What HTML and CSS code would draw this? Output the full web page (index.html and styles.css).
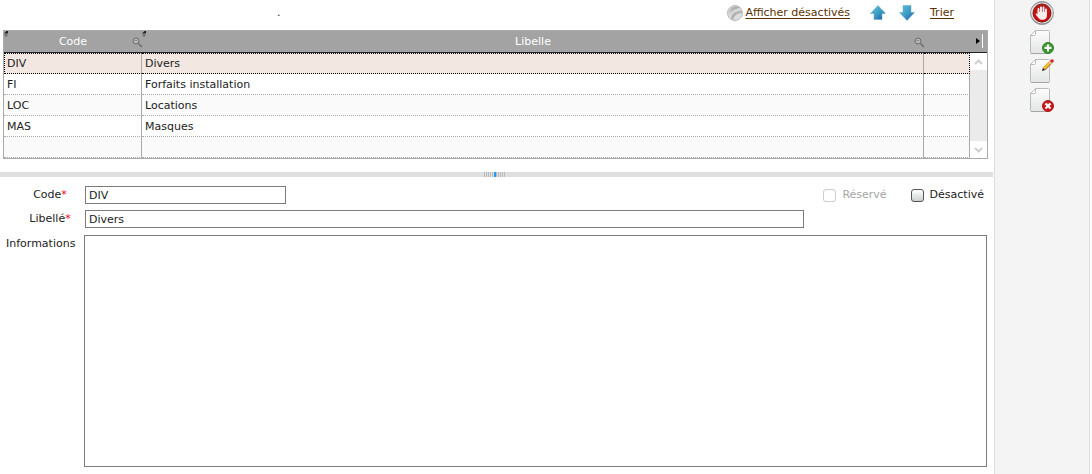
FILE: index.html
```html
<!DOCTYPE html>
<html lang="fr">
<head>
    <meta charset="UTF-8">
    <meta name="viewport" content="width=device-width, initial-scale=1.0">
    <title>Divers</title>
    <link rel="stylesheet" href="styles.css">
</head>
<body>
    <!-- shared shapes -->
    <svg class="defs" width="0" height="0" aria-hidden="true">
        <defs>
            <linearGradient id="paper" x1="0" y1="0" x2="0" y2="1">
                <stop offset="0" stop-color="#fdfdfd"/>
                <stop offset="1" stop-color="#e2e5e4"/>
            </linearGradient>
            <linearGradient id="blue" x1="0" y1="0" x2="1" y2="1">
                <stop offset="0" stop-color="#5cc0d6"/>
                <stop offset="0.5" stop-color="#3e9fc6"/>
                <stop offset="1" stop-color="#1c55a5"/>
            </linearGradient>
            <linearGradient id="metal" x1="0" y1="0" x2="0" y2="1">
                <stop offset="0" stop-color="#8b8b8b"/>
                <stop offset="0.4" stop-color="#e8e8e8"/>
                <stop offset="1" stop-color="#777"/>
            </linearGradient>
            <linearGradient id="red" x1="0" y1="0" x2="0" y2="1">
                <stop offset="0" stop-color="#b02020"/>
                <stop offset="1" stop-color="#d80808"/>
            </linearGradient>
            <linearGradient id="ball" x1="0" y1="0" x2="0" y2="1">
                <stop offset="0" stop-color="#a8a8a8"/>
                <stop offset="1" stop-color="#dedede"/>
            </linearGradient>
            <symbol id="page" viewBox="0 0 24 24">
                <path d="M5.500 .5H18.500Q19.500 .5 19.500 1.500V22.500Q19.500 23.500 18.500 23.500H1.500Q.5 23.500 .5 22.500V5.500Z" fill="url(#paper)" stroke="#bbb"/>
                <path d="M.5 5.500L5.500 .5V4.500Q5.500 5.500 4.500 5.500Z" fill="#fff" stroke="#bbb"/>
                <path d="M1 23.500H19" stroke="#a5a5a5"/>
            </symbol>
            <symbol id="loupe" viewBox="0 0 11 11">
                <circle cx="4" cy="4" r="3" fill="#b5b5b5" stroke="#6c6c6c"/>
                <path d="M2.500 3.500H5" stroke="#8a8a8a"/>
                <path d="M6.500 6.500L10 10" stroke="#6c6c6c" stroke-width="1.500"/>
            </symbol>
            <symbol id="sort" viewBox="0 0 5 6">
                <path d="M0 2.500L2.500 0H4V2.500Z" fill="#222"/>
                <path d="M0 3.500H4L2 6Z" fill="#666"/>
            </symbol>
        </defs>
    </svg>

    <main class="content">
        <div class="toolbar">
            <span class="title">.</span>
            <a href="#" class="toggle">
                <svg width="16" height="16" viewBox="0 0 16 16" aria-hidden="true">
                    <circle cx="8" cy="8" r="7.500" fill="#dcdcdc" stroke="#b9b9b9"/>
                    <path d="M1.500 11C4 10 5 4 13.500 3C8 -1 1 3 1.500 11Z" fill="url(#ball)"/>
                    <path d="M4 14C4 9 9 5 15 6C16 11 10 16 4 14Z" fill="#b4b4b4"/>
                    <path d="M6.500 14.500C7 11 10 8 15 8C15 12 11 15.500 6.500 14.500Z" fill="#dedede"/>
                </svg>
                <span>Afficher désactivés</span>
            </a>
            <button type="button" class="icon-btn move" aria-label="Monter">
                <svg width="16" height="16" viewBox="0 0 16 16"><path d="M8 .5L15.500 8.500H12V14.500H4V8.500H.5Z" fill="url(#blue)" stroke="#66a9bd" stroke-width=".5"/></svg>
            </button>
            <button type="button" class="icon-btn move" aria-label="Descendre">
                <svg width="16" height="16" viewBox="0 0 16 16"><path d="M8 15.500L15.500 7.500H12V.5H4V7.500H.5Z" fill="url(#blue)" stroke="#66a9bd" stroke-width=".5"/></svg>
            </button>
            <a href="#" class="sort-link">Trier</a>
        </div>

        <table class="grid">
            <colgroup>
                <col class="col-code">
                <col>
                <col class="col-extra">
                <col class="col-scroll">
            </colgroup>
            <thead>
                <tr>
                    <th>
                        <svg class="sort" width="5" height="6" aria-hidden="true"><use href="#sort"/></svg>
                        Code
                        <button type="button" class="icon-btn search" aria-label="Rechercher par code"><svg width="11" height="11"><use href="#loupe"/></svg></button>
                    </th>
                    <th>
                        <svg class="sort" width="5" height="6" aria-hidden="true"><use href="#sort"/></svg>
                        Libelle
                        <button type="button" class="icon-btn search" aria-label="Rechercher par libelle"><svg width="11" height="11"><use href="#loupe"/></svg></button>
                    </th>
                    <th colspan="2">
                        <button type="button" class="icon-btn more" aria-label="Colonnes"><svg width="8" height="14" viewBox="0 0 8 14"><path d="M0 4L4 7L0 10Z" fill="#000"/><path d="M6.500 0V14" stroke="#fff"/></svg></button>
                    </th>
                </tr>
            </thead>
            <tbody>
                <tr class="selected">
                    <td>DIV</td>
                    <td>Divers</td>
                    <td></td>
                    <td rowspan="5" class="scroll">
                        <div class="scrollbar">
                            <button type="button" class="icon-btn" aria-label="Défiler vers le haut"><svg width="9" height="6" viewBox="0 0 9 6"><path d="M1 5L4.500 1.500L8 5" fill="none" stroke="#cfcfcf" stroke-width="2"/></svg></button>
                            <div class="track"></div>
                            <button type="button" class="icon-btn" aria-label="Défiler vers le bas"><svg width="9" height="6" viewBox="0 0 9 6"><path d="M1 1L4.500 4.500L8 1" fill="none" stroke="#cfcfcf" stroke-width="2"/></svg></button>
                        </div>
                    </td>
                </tr>
                <tr><td>FI</td><td>Forfaits installation</td><td></td></tr>
                <tr><td>LOC</td><td>Locations</td><td></td></tr>
                <tr><td>MAS</td><td>Masques</td><td></td></tr>
                <tr><td></td><td></td><td></td></tr>
            </tbody>
        </table>

        <div class="splitter"><span class="grip"></span></div>

        <form class="details">
            <div class="row">
                <label for="code" class="required">Code<em>*</em></label>
                <input type="text" id="code" class="short" value="DIV">
                <div class="flags">
                    <label class="disabled"><input type="checkbox" disabled> Réservé</label>
                    <label><input type="checkbox"> Désactivé</label>
                </div>
            </div>
            <div class="row">
                <label for="libelle" class="required">Libellé<em>*</em></label>
                <input type="text" id="libelle" class="long" value="Divers">
            </div>
            <div class="row infos">
                <label for="infos">Informations</label>
                <textarea id="infos"></textarea>
            </div>
        </form>
    </main>

    <aside class="actions">
        <button type="button" class="icon-btn" aria-label="Fermer">
            <svg width="24" height="24" viewBox="0 0 24 24">
                <circle cx="12" cy="12" r="11.500" fill="url(#metal)" stroke="#999"/>
                <circle cx="12" cy="12" r="10" fill="none" stroke="#eee"/>
                <circle cx="12" cy="12" r="9" fill="url(#red)" stroke="#8c1515"/>
                <path d="M8.500 13V8M11 12V6.500M13.500 12V6.500M16 13V8.500" stroke="#fff" stroke-width="1.800" stroke-linecap="round"/>
                <path d="M7.700 11H16.900V15Q16.500 18.500 13 18.800H11Q9.500 18.500 8.500 17L5.700 13.500Q5.600 12.200 6.800 12.500L8 13.500Z" fill="#f7eeee"/>
            </svg>
        </button>
        <button type="button" class="icon-btn" aria-label="Nouveau">
            <svg width="24" height="24" viewBox="0 0 24 24">
                <use href="#page"/>
                <circle cx="18" cy="18" r="5.500" fill="#389329" stroke="#39833b"/>
                <path d="M14 17A4.500 4.500 0 0 1 22 17Z" fill="#62ad55"/>
                <path d="M18 14.500V21.500M14.500 18H21.500" stroke="#fff" stroke-width="2"/>
            </svg>
        </button>
        <button type="button" class="icon-btn" aria-label="Modifier">
            <svg width="24" height="24" viewBox="0 0 24 24">
                <use href="#page"/>
                <path d="M14 10L21 3" stroke="#b5762a" stroke-width="3.500"/>
                <path d="M14 9.500L20.500 3" stroke="#ffc629" stroke-width="2.200"/>
                <path d="M12 12L12.800 9L15.300 11Z" fill="#222"/>
                <path d="M19.500 2L21.500 4.500" stroke="#ddd" stroke-width="1.500"/>
                <circle cx="22" cy="2" r="1.800" fill="#d3262f"/>
            </svg>
        </button>
        <button type="button" class="icon-btn" aria-label="Supprimer">
            <svg width="24" height="24" viewBox="0 0 24 24">
                <use href="#page"/>
                <circle cx="18" cy="18" r="5.500" fill="#cf1015" stroke="#a92222"/>
                <path d="M14 17A4.500 4.500 0 0 1 22 17Z" fill="#c94343"/>
                <path d="M15.500 15.500L20.500 20.500M20.500 15.500L15.500 20.500" stroke="#fff" stroke-width="2.200"/>
            </svg>
        </button>
    </aside>
</body>
</html>
```
FILE: styles.css
```css
* {
    box-sizing: border-box;
}

body {
    margin: 0;
    min-height: 100vh;
    display: flex;
    background: #fff;
    color: #222;
    font-family: Verdana, "DejaVu Sans", sans-serif;
    font-size: 11px;
    line-height: 14px;
}

input,
textarea,
button {
    font: inherit;
    color: inherit;
}

svg {
    display: block;
}

.defs {
    position: absolute;
}

.content {
    flex: 1;
    min-width: 0;
    display: flex;
    flex-direction: column;
}

.icon-btn {
    display: block;
    padding: 0;
    border: 0;
    background: none;
    cursor: pointer;
}

/* toolbar */
.toolbar {
    height: 30px;
    padding: 0 40px 4px 277px;
    display: flex;
    align-items: center;
}

.toolbar a {
    color: #5a3200;
    text-underline-offset: 2px;
}

.title {
    margin-right: auto;
}

.toggle {
    display: flex;
    align-items: center;
    gap: 2px;
    margin-right: 20px;
}

.move {
    margin-right: 13px;
}

.sort-link {
    margin-left: 2px;
}

/* table */
.grid {
    margin: 0 6px 0 3px;
    border: 1px solid #aaa;
    border-spacing: 0;
    table-layout: fixed;
}

.col-code {
    width: 138px;
}

.col-extra {
    width: 46px;
}

.col-scroll {
    width: 17px;
}

.grid th {
    position: relative;
    height: 22px;
    padding: 0;
    background: #a3a3a3;
    border-bottom: 1px solid #222;
    color: #fff;
    font-weight: normal;
}

.sort {
    position: absolute;
    top: 0;
    left: 0;
}

.search {
    position: absolute;
    top: 6px;
    right: -1px;
    z-index: 1;
}

.more {
    position: absolute;
    top: 3px;
    right: 3px;
}

.grid td {
    height: 21px;
    padding: 1px 3px 0;
    border-right: 1px solid #aaa;
    border-bottom: 1px dotted #aaa;
}

.grid tr:nth-child(odd) td {
    background: #fafafa;
}

.grid tr.selected td {
    padding-top: 0;
    background: #f2e7e1;
    border-top: 1px dotted #000;
    border-bottom: 1px dotted #000;
}

.grid tr.selected td:first-child {
    padding-left: 2px;
    border-left: 1px dotted #000;
}

.grid tr.selected td:nth-child(3) {
    border-right: 1px dotted #000;
}

.grid tr.selected .scroll {
    height: 105px;
    padding: 0;
    border: 0;
    background: #ebebeb;
}

.scrollbar {
    height: 105px;
    display: flex;
    flex-direction: column;
}

.scrollbar button {
    height: 17px;
    padding: 0 4px;
    background: #fff;
}

.track {
    flex: 1;
}

/* splitter */
.splitter {
    height: 5px;
    margin: 13px 1px 9px 0;
    padding-right: 3px;
    display: flex;
    justify-content: center;
    background: #dfdfdf;
}

.grip {
    width: 22px;
    background: linear-gradient(#1e9bf5, #1e9bf5) 10px 0 / 2px 5px no-repeat, repeating-linear-gradient(90deg, #bbb 0 1px, #dfdfdf 1px 2px);
}

/* form */
.details {
    flex: 1;
    display: flex;
    flex-direction: column;
    gap: 6px;
    padding: 0 7px 7px 0;
}

.row {
    display: flex;
    align-items: center;
}

.row > label {
    width: 84px;
    padding-left: 6px;
    flex: none;
}

.row > .required {
    padding-left: 16px;
    text-align: center;
}

.required em {
    color: #f00;
    font-style: normal;
}

input[type="text"] {
    height: 18px;
    margin: 0 0 0 1px;
    padding: 0 3px;
    border: 1px solid #7b7b7b;
    background: #fff;
}

.short {
    width: 201px;
}

.long {
    width: 719px;
}

.flags {
    display: flex;
    gap: 24px;
    margin-left: auto;
    padding-right: 3px;
}

.flags label {
    display: flex;
    align-items: center;
    gap: 6px;
}

.flags .disabled {
    color: #a5a5a5;
}

input[type="checkbox"] {
    appearance: none;
    width: 13px;
    height: 13px;
    margin: 0;
    border: 1px solid #555;
    border-radius: 3px;
    background: linear-gradient(#fff, #ccd1d0);
}

input[type="checkbox"]:disabled {
    border-color: #ccc;
    background: #fff;
}

.infos {
    flex: 1;
    align-items: stretch;
    padding-top: 1px;
}

.infos label {
    padding-top: 2px;
}

textarea {
    flex: 1;
    min-width: 0;
    margin: 0;
    padding: 3px 4px;
    border: 1px solid #7b7b7b;
    resize: none;
}

/* right column */
.actions {
    width: 96px;
    margin-right: 2px;
    padding-top: 1px;
    display: flex;
    flex-direction: column;
    align-items: center;
    gap: 5px;
    background: #f4f4f4;
    border-left: 1px solid #ddd;
    border-right: 1px solid #ddd;
}
```
